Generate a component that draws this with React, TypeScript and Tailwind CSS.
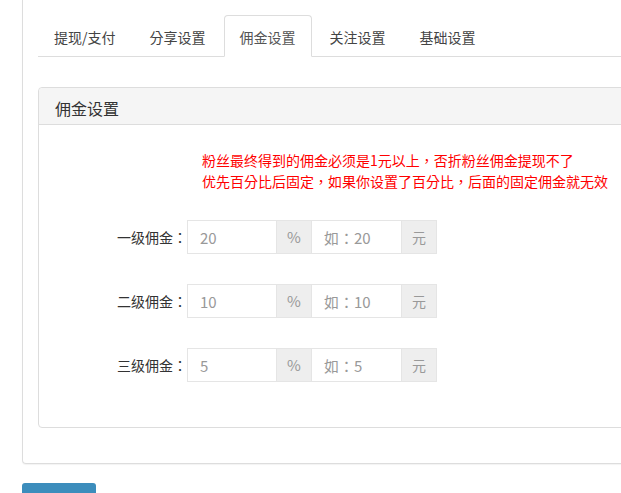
import React from 'react';

const tabs = ['提现/支付', '分享设置', '佣金设置', '关注设置', '基础设置'];

const levels = [
  { label: '一级佣金：', value: '20', placeholder: '如：20' },
  { label: '二级佣金：', value: '10', placeholder: '如：10' },
  { label: '三级佣金：', value: '5', placeholder: '如：5' },
];

const App: React.FC = () => {
  return (
    <div
      className="w-[621px] h-[493px] overflow-hidden bg-white text-[14px] text-[#333]"
      style={{ fontFamily: '"Noto Sans CJK TC", "Noto Sans CJK SC", "Liberation Sans", sans-serif' }}
    >
      {/* outer box, top edge sits above the viewport */}
      <div className="ml-[22px] w-[720px] border border-t-0 border-[#ddd] rounded-b-[4px] px-[15px] pt-[15px] pb-[35px] shadow-[0_1px_1px_rgba(0,0,0,0.05)]">
        <ul className="flex border-b border-[#ddd]">
          {tabs.map((t) => {
            const active = t === '佣金设置';
            return (
              <li key={t} className="mr-[2px] -mb-px">
                <a
                  className={
                    active
                      ? 'block px-[15px] pt-[11px] pb-[9px] leading-[20px] border border-[#ddd] border-b-transparent rounded-t-[4px] bg-white text-[#555]'
                      : 'block px-[15px] pt-[11px] pb-[9px] leading-[20px] border border-transparent rounded-t-[4px] text-[#444]'
                  }
                >
                  {t}
                </a>
              </li>
            );
          })}
        </ul>

        {/* panel */}
        <div className="mt-[30px] border border-[#ddd] rounded-[4px] bg-white">
          <div className="h-[37px] flex items-center pt-[3px] px-[16px] bg-[#f5f5f5] border-b border-[#ddd] rounded-t-[4px] text-[16px] text-[#333]">
            佣金设置
          </div>
          <div className="pt-[25px] pb-[45px]">
            <div className="pl-[163px] text-[#ff0000] leading-[21px]">
              <p>粉丝最终得到的佣金必须是1元以上，否折粉丝佣金提现不了</p>
              <p>优先百分比后固定，如果你设置了百分比，后面的固定佣金就无效</p>
            </div>

            <div className="mt-[28px] flex flex-col gap-[30px]">
              {levels.map((l) => (
                <div key={l.label} className="flex items-center">
                  <label className="w-[148px] text-right text-[#333]">{l.label}</label>
                  <div className="flex h-[34px]">
                    <input
                      defaultValue={l.value}
                      className="w-[90px] h-[34px] border border-[#e5e5e5] px-[12px] text-[15px] text-[#999] outline-none"
                    />
                    <span className="w-[34px] h-[34px] flex items-center justify-center bg-[#eee] border-y border-[#e5e5e5] text-[15px] text-[#999]">
                      %
                    </span>
                    <input
                      placeholder={l.placeholder}
                      className="w-[91px] h-[34px] border border-[#e5e5e5] px-[12px] text-[15px] text-[#999] placeholder:text-[#999] outline-none"
                    />
                    <span className="w-[35px] h-[34px] flex items-center justify-center bg-[#eee] border-y border-r border-[#e5e5e5] text-[#999]">
                      元
                    </span>
                  </div>
                </div>
              ))}
            </div>
          </div>
        </div>
      </div>

      <button className="mt-[19px] ml-[22px] w-[74px] h-[34px] rounded-[3px] bg-[#3c8dbc]" aria-label="保存" />
    </div>
  );
};

export default App;
